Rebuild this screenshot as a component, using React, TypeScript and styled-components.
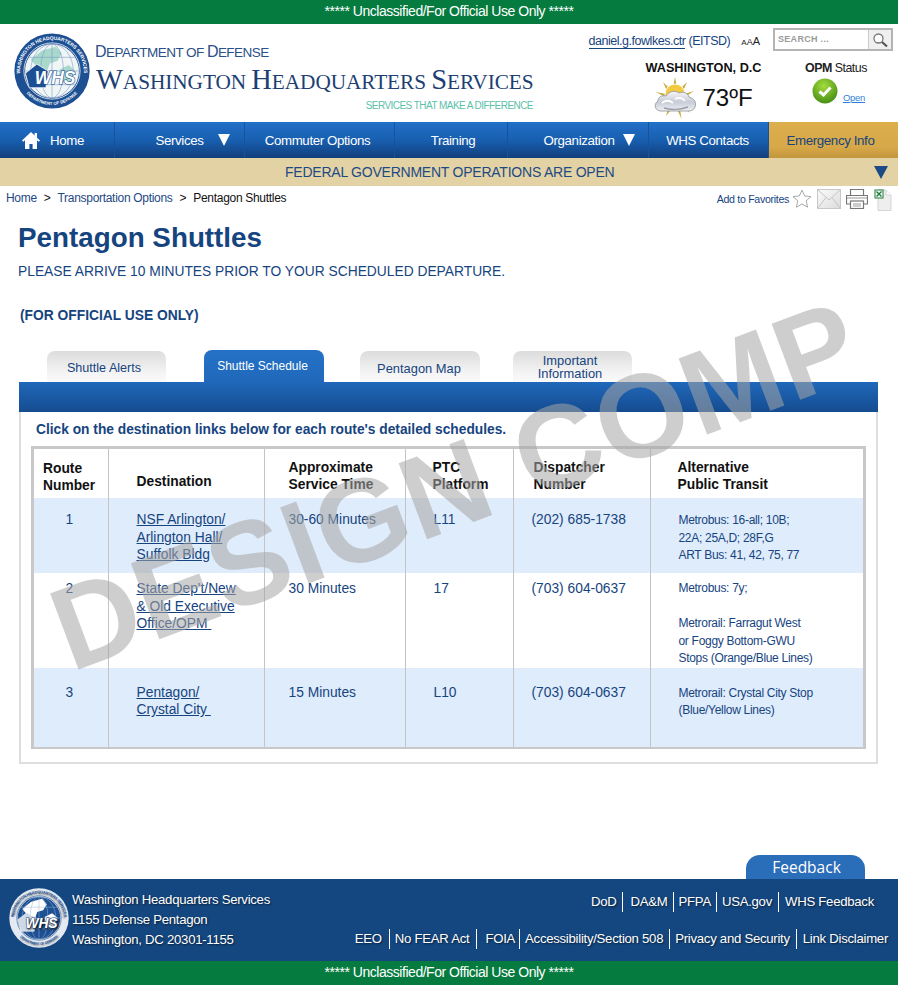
import React from "react";
import styled, { createGlobalStyle } from "styled-components";

const Global = createGlobalStyle`
  html, body { margin: 0; padding: 0; background: #fff; }
  body { font-family: "Liberation Sans", Arial, sans-serif; color: #16447f; }
  * { box-sizing: border-box; }
`;

const Page = styled.div`
  position: relative;
  width: 898px;
  height: 985px;
  overflow: hidden;
  display: flex;
  flex-direction: column;
`;
const Classification = styled.div`
  height: 24px;
  flex: none;
  background: #067b3f;
  color: #fff;
  font-size: 14px;
  letter-spacing: -.47px;
  line-height: 23px;
  text-align: center;
`;
const Header = styled.header`
  height: 98px;
  flex: none;
  display: flex;
  padding: 9px 5px 0 14px;
`;
const Brand = styled.div`
  display: flex;
  gap: 5px;
  width: 560px;
`;
const BrandText = styled.div`
  display: flex;
  flex-direction: column;
  padding-top: 9px;
`;
const Dept = styled.div`
  font-size: 13.5px;
  line-height: 19px;
  color: #2a4f8a;
  letter-spacing: -.55px;
  white-space: nowrap;
  b { font-weight: 400; font-size: 16px; }
`;
const Wash = styled.div`
  font-family: "Liberation Serif", serif;
  font-size: 21.3px;
  line-height: 32px;
  margin-top: 2px;
  margin-left: 1px;
  color: #1d3f74;
  letter-spacing: -.07px;
  white-space: nowrap;
  b { font-weight: 400; font-size: 28.5px; }
`;
const Motto = styled.div`
  font-size: 10px;
  line-height: 14px;
  margin-top: 1px;
  text-align: right;
  color: #5cbfa8;
  width: 438px;
  letter-spacing: -.55px;
`;
const Utility = styled.div`
  flex: 1;
  display: flex;
  flex-direction: column;
`;
const UserRow = styled.div`
  display: flex;
  justify-content: flex-end;
  align-items: flex-start;
  height: 27px;
`;
const User = styled.div`
  font-size: 12.5px;
  line-height: 16px;
  letter-spacing: -.47px;
  white-space: nowrap;
  a { color: #16447f; text-decoration: none; border-bottom: 1px solid #16447f; }
`;
const TextSize = styled.div`
  color: #222;
  font-size: 8px;
  line-height: 14px;
  margin: 1px 13px 0 11px;
  b { font-weight: 400; font-size: 11px; }
  i { font-style: normal; font-size: 9px; }
`;
const Search = styled.div`
  width: 120px;
  height: 23px;
  margin-top: -5px;
  border: 2px solid #b4b4b4;
  display: flex;
  background: #fff;
`;
const SearchField = styled.div`
  flex: 1;
  font-size: 9px;
  letter-spacing: .3px;
  line-height: 19px;
  padding-left: 3px;
  color: #9a9a9a;
  border-right: 1px solid #ccc;
  font-weight: 700;
`;
const SearchBtn = styled.div`
  width: 22px;
  background: #f0f0f0;
  display: flex;
  align-items: center;
  justify-content: center;
`;
const WidgetRow = styled.div`
  display: flex;
`;
const Weather = styled.div`
  width: 143px;
  margin-left: 58px;
  display: flex;
  flex-direction: column;
  align-items: center;
`;
const City = styled.div`
  font-size: 12.7px;
  line-height: 16px;
  font-weight: 700;
  color: #111;
  white-space: nowrap;
`;
const Temp = styled.div`
  display: flex;
  align-items: center;
  gap: 5px;
  margin-top: 1px;
  font-size: 24px;
  line-height: 34px;
  color: #111;
`;
const Opm = styled.div`
  margin-left: 26px;
  width: 70px;
  display: flex;
  flex-direction: column;
  align-items: center;
`;
const OpmTitle = styled.div`
  font-size: 12.4px;
  line-height: 16px;
  color: #222;
  white-space: nowrap;
  letter-spacing: -.5px;
  b { font-weight: 700; }
`;
const OpmBody = styled.div`
  display: flex;
  align-items: flex-end;
  gap: 5px;
  margin-left: 5px;
  margin-top: 2px;
  a { color: #2f7fd8; font-size: 9.4px; line-height: 11px; letter-spacing: -.2px; text-decoration: underline; margin-bottom: 1px; }
`;
const Nav = styled.nav`
  height: 36px;
  flex: none;
  display: grid;
  grid-template-columns: 115px 130px 150px 113px 141px 120px 129px;
  background: linear-gradient(#2270c8, #185fb0 50%, #123f7c);
`;
const NavItem = styled.div<{ $warm?: boolean; $pl?: number; $gap?: number; $pr?: number }>`
  display: flex;
  align-items: center;
  justify-content: center;
  gap: ${p => p.$gap ?? 10}px;
  padding-left: ${p => p.$pl ?? 0}px;
  padding-right: ${p => p.$pr ?? 0}px;
  font-size: 13.3px;
  letter-spacing: -.38px;
  color: ${p => (p.$warm ? "#16447f" : "#fff")};
  background: ${p => (p.$warm ? "linear-gradient(#dcae4c, #d6a848 70%, #c4963c)" : "transparent")};
  border-right: ${p => (p.$warm ? "none" : "1px solid #175398")};
  white-space: nowrap;
`;
const Caret = styled.span<{ $c?: string; $w?: number; $h?: number }>`
  display: inline-block;
  width: 0;
  height: 0;
  border-left: ${p => (p.$w ?? 13) / 2}px solid transparent;
  border-right: ${p => (p.$w ?? 13) / 2}px solid transparent;
  border-top: ${p => p.$h ?? 12}px solid ${p => p.$c ?? "#fff"};
`;
const GovBar = styled.div`
  height: 28px;
  flex: none;
  background: #e3d3a4;
  color: #1d4a85;
  font-size: 14px;
  letter-spacing: -.23px;
  line-height: 27px;
  display: flex;
  justify-content: space-between;
  align-items: center;
  padding: 0 10px 0 285px;
`;
const Crumbs = styled.div`
  height: 26px;
  flex: none;
  display: flex;
  justify-content: space-between;
  padding: 5px 6px 0 6px;
`;
const CrumbList = styled.div`
  display: flex;
  gap: 7px;
  font-size: 12px;
  line-height: 15px;
  letter-spacing: -.3px;
  color: #111;
  a { color: #1d4a85; text-decoration: none; }
`;
const Tools = styled.div`
  display: flex;
  align-items: flex-start;
  gap: 5px;
  margin-top: -2px;
  font-size: 10.6px;
  line-height: 20px;
  letter-spacing: -.3px;
  color: #16447f;
  svg:first-of-type { margin-left: -2px; }
`;
const Main = styled.main`
  flex: 1;
  padding: 9px 20px 0 19px;
  display: flex;
  flex-direction: column;
  align-items: stretch;
`;
const Title = styled.h1`
  margin: 0 0 0 -1px;
  font-size: 27.8px;
  line-height: 34px;
  font-weight: 700;
  color: #16447f;
`;
const Notice = styled.p`
  margin: 8px 0 0 -1px;
  font-size: 13.8px;
  line-height: 18px;
`;
const Fouo = styled.p`
  margin: 26px 0 0 1px;
  font-size: 13.8px;
  line-height: 18px;
  font-weight: 700;
`;
const Tabs = styled.div`
  display: flex;
  margin-top: 25px;
  height: 32px;
  align-items: flex-end;
  padding-left: 28px;
`;
const Tab = styled.div<{ $active?: boolean; $w: number; $gap: number; $fs?: number; $nudge?: number; $lift?: number }>`
  width: ${p => p.$w}px;
  margin-right: ${p => p.$gap}px;
  height: ${p => (p.$active ? 32 : 31)}px;
  border-radius: 8px 8px 0 0;
  background: ${p => (p.$active ? "linear-gradient(#2472c8, #2068ba)" : "linear-gradient(#dcdcdc, #f4f4f4 70%, #fafafa)")};
  color: ${p => (p.$active ? "#fff" : "#16447f")};
  font-size: ${p => p.$fs ?? 12.6}px;
  line-height: 13px;
  display: flex;
  align-items: center;
  justify-content: center;
  text-align: center;
  padding-top: ${p => (p.$active ? 0 : 3 - (p.$lift ?? 0))}px;
  padding-right: ${p => p.$nudge ?? 0}px;
`;
const TabBar = styled.div`
  height: 30px;
  background: linear-gradient(#2068ba, #154c90);
  flex: none;
`;
const Panel = styled.section`
  height: 352px;
  border: 2px solid #dedede;
  border-top: none;
  padding: 0 10px;
`;
const Hint = styled.div`
  font-size: 13.75px;
  font-weight: 700;
  line-height: 33px;
  padding: 1px 0 0 5px;
  white-space: nowrap;
`;
const TableFrame = styled.div`
  border: 3px solid #c9c7c7;
  height: 303px;
`;
const Grid = styled.table`
  width: 100%;
  height: 100%;
  border-collapse: collapse;
  table-layout: fixed;
`;
const Th = styled.th<{ $w?: number; $pl: number; $pb?: number; $end?: boolean }>`
  ${p => (p.$w ? `width: ${p.$w}px;` : "")}
  padding: 0 0 ${p => p.$pb ?? 5}px ${p => p.$pl}px;
  height: 49px;
  text-align: left;
  font-size: 13.8px;
  line-height: 17px;
  color: #111;
  vertical-align: bottom;
  border-right: ${p => (p.$end ? "none" : "1px solid #c4c4c4")};
`;
const Row = styled.tr<{ $shade?: boolean; $h: number }>`
  height: ${p => p.$h}px;
  background: ${p => (p.$shade ? "#dfecfb" : "#fff")};
`;
const Td = styled.td<{ $pl: number; $center?: boolean; $end?: boolean; $pt: number; $small?: boolean }>`
  vertical-align: top;
  padding: ${p => p.$pt}px ${p => (p.$center ? 3 : 0)}px 0 ${p => p.$pl}px;
  font-size: ${p => (p.$small ? "12px" : "13.8px")};
  line-height: 17.5px;
  letter-spacing: ${p => (p.$small ? "-.3px" : "0")};
  text-align: ${p => (p.$center ? "center" : "left")};
  color: #16447f;
  border-right: ${p => (p.$end ? "none" : "1px solid #c4c4c4")};
  a { color: #16447f; text-decoration: underline; }
`;
const Watermark = styled.div`
  position: absolute;
  left: 455px;
  top: 485px;
  transform: translate(-50%, -50%) rotate(-20.5deg);
  font-size: 118px;
  line-height: 1;
  font-weight: 700;
  color: rgba(165, 165, 165, .55);
  white-space: nowrap;
  letter-spacing: 1px;
  pointer-events: none;
`;
const FeedbackRow = styled.div`
  flex: none;
  height: 24px;
  display: flex;
  justify-content: flex-end;
  padding-right: 33px;
`;
const Feedback = styled.div`
  width: 119px;
  height: 24px;
  border-radius: 14px 14px 0 0;
  background: #2a6db8;
  color: #fff;
  text-align: center;
  font-family: "Open Sans", sans-serif;
  font-size: 15.5px;
  line-height: 24px;
  padding-left: 2px;
`;
const Footer = styled.footer`
  height: 82px;
  flex: none;
  background: #144780;
  color: #fff;
  display: flex;
  justify-content: space-between;
  padding: 0 10px 0 9px;
  text-shadow: 1px 1px 2px rgba(0,0,0,.6);
  font-size: 13.2px;
  letter-spacing: -.28px;
`;
const Address = styled.div`
  display: flex;
  gap: 3px;
  padding-top: 9px;
  line-height: 20px;
`;
const AddressText = styled.div`
  padding-top: 2px;
  white-space: nowrap;
`;
const LinkCols = styled.div`
  display: flex;
  flex-direction: column;
  align-items: flex-end;
  padding-top: 13px;
  gap: 17px;
`;
const LinkRow = styled.div<{ $inset?: number }>`
  display: flex;
  height: 20px;
  align-items: center;
  white-space: nowrap;
  margin-right: ${p => p.$inset ?? 0}px;
`;
const LinkItem = styled.span<{ $pl: number; $pr: number; $last?: boolean }>`
  padding: 0 ${p => p.$pr}px 0 ${p => p.$pl}px;
  line-height: 20px;
  border-right: ${p => (p.$last ? "none" : "1px solid #fff")};
`;

const Seal = ({ size, mono }: { size: number; mono?: boolean }) => {
  const a = mono ? "m" : "c";
  return (
    <svg width={size} height={size} viewBox="0 0 100 100" aria-hidden="true">
      <circle cx="50" cy="50" r="49.500" fill={mono ? "#e4eaf2" : "#1d4f93"} />
      <circle cx="50" cy="50" r="37" fill="none" stroke={mono ? "#1d5092" : "#fff"} strokeWidth="1" />
      <circle cx="50" cy="50" r="35.500" fill={mono ? "#1d5092" : "#f0f6f6"} />
      <path d="M22 35l15-12 18-5 8 9-6 10-10 3-3 9-9 2-6-8z" fill={mono ? "#fff" : "#a8d9cb"} />
      <path d="M60 48l12-6 9 8-6 14-11 2-5-8z" fill={mono ? "#fff" : "#a8d9cb"} />
      <g fill="none" stroke={mono ? "#9db6d6" : "#7f9cc8"} strokeWidth=".8">
        <ellipse cx="50" cy="50" rx="15" ry="35.500" />
        <ellipse cx="50" cy="50" rx="28" ry="35.500" />
        <path d="M14.500 50h71M19 32h62M19 68h62M50 14.500v71" />
      </g>
      <path d="M15 53L30 41 45 50 42 72H20z" fill={mono ? "#cfd9e6" : "#1d4f93"} stroke="#fff" strokeWidth="1" />
      <text x="54" y="67" textAnchor="middle" fontFamily="Liberation Sans, sans-serif" fontWeight="700" fontStyle="italic" fontSize="23" fill="#fff" stroke={mono ? "#1d5092" : "#1d4f93"} strokeWidth="1.600" paintOrder="stroke">WHS</text>
      <defs>
        <path id={`${a}Top`} d="M9 60A42 42 0 1 1 91 60" />
        <path id={`${a}Bot`} d="M10 69A44 44 0 0 0 90 69" />
      </defs>
      <text fontSize="6.500" fontWeight="700" fill={mono ? "#1d5092" : "#fff"} fontFamily="Liberation Sans, sans-serif">
        <textPath href={`#${a}Top`} startOffset="50%" textAnchor="middle">WASHINGTON HEADQUARTERS SERVICES</textPath>
      </text>
      <text fontSize="5.600" fontWeight="700" fill={mono ? "#1d5092" : "#fff"} fontFamily="Liberation Sans, sans-serif">
        <textPath href={`#${a}Bot`} startOffset="50%" textAnchor="middle">DEPARTMENT OF DEFENSE</textPath>
      </text>
    </svg>
  );
};

const WeatherIcon = () => (
  <svg width="43" height="42" viewBox="0 0 43 42" aria-hidden="true">
    <defs>
      <linearGradient id="cloud" x1="0" y1="0" x2="0" y2="1">
        <stop offset="0" stopColor="#f6f7fa" />
        <stop offset=".55" stopColor="#c8ccd6" />
        <stop offset="1" stopColor="#eef0f4" />
      </linearGradient>
    </defs>
    <g fill="#c9a93c">
      <path d="M21 0l2 10h-4zM9 5l7 7-3 2zM33 5l-7 7 3 2zM2 15l10 2-1 3zM40 14l-10 3 1 3zM26 32l1.500 10-4-9zM14 32l-2 7 4-5zM33 31l3 5-5-4z" />
    </g>
    <circle cx="21" cy="17" r="10" fill="#f3c93f" stroke="#fff" strokeWidth="1" />
    <path d="M7 34c-6 0-8-7-3-10 0-4 4-6 8-5 3-5 9-6 13-3 4-2 9 0 10 4 5 1 8 6 6 10-1 3-4 4-7 4z" fill="url(#cloud)" stroke="#8d9099" strokeWidth=".8" />
    <path d="M8 26c3-3 8-3 11 0M21 22c4-2 8-1 10 2" fill="none" stroke="#fff" strokeWidth="1.800" />
    <path d="M10 31c6 2 16 2 24-1" fill="none" stroke="#9a9da6" strokeWidth="1.500" />
  </svg>
);

const CheckIcon = () => (
  <svg width="26" height="26" viewBox="0 0 26 26" aria-hidden="true">
    <defs>
      <radialGradient id="ok" cx="45%" cy="30%" r="75%">
        <stop offset="0" stopColor="#a5dc3c" />
        <stop offset="1" stopColor="#3f8a12" />
      </radialGradient>
    </defs>
    <circle cx="13" cy="13" r="12.500" fill="url(#ok)" />
    <path d="M7.500 13.500l4 3.500 7-7.500" fill="none" stroke="#fff" strokeWidth="3" />
  </svg>
);

const HomeIcon = () => (
  <svg width="18" height="17" viewBox="0 0 18 17" aria-hidden="true">
    <path d="M9 0L0 8.500l1.200 1.300L3 8.200V17h4.400v-5h3.200v5H15V8.200l1.800 1.600L18 8.500 15 5.700V1h-2.400v2.400z" fill="#fff" />
  </svg>
);

const MagnifierIcon = () => (
  <svg width="16" height="16" viewBox="0 0 16 16" aria-hidden="true">
    <circle cx="6.500" cy="6.500" r="4.500" fill="#fff" stroke="#777" strokeWidth="1.300" />
    <path d="M10 10l5 4.500" stroke="#555" strokeWidth="2.200" />
  </svg>
);

const StarIcon = () => (
  <svg width="20" height="20" viewBox="0 0 20 20" aria-hidden="true">
    <path d="M10 1l2.700 6 6.300.6-4.800 4.200 1.400 6.400L10 15l-5.600 3.200 1.400-6.400L1 7.600 7.300 7z" fill="#fff" stroke="#aaa" />
  </svg>
);

const MailIcon = () => (
  <svg width="24" height="20" viewBox="0 0 24 20" aria-hidden="true">
    <defs>
      <linearGradient id="mail" x1="0" y1="0" x2="1" y2="1">
        <stop offset="0" stopColor="#fbfbfb" />
        <stop offset="1" stopColor="#dcdcdc" />
      </linearGradient>
    </defs>
    <rect x=".5" y=".5" width="23" height="19" fill="url(#mail)" stroke="#c8c8c8" />
    <path d="M1 1l11 10L23 1M1 19l8-10.500M23 19l-8-10.500" fill="none" stroke="#c4c4c4" />
  </svg>
);

const PrintIcon = () => (
  <svg width="22" height="20" viewBox="0 0 22 20" aria-hidden="true">
    <path d="M4.500 6V.5h13V6M4.500 15H.5V6.500h21V15H17.500" fill="#fff" stroke="#777" strokeWidth="1.200" />
    <rect x="4.500" y="12" width="13" height="7.500" fill="#fff" stroke="#777" strokeWidth="1.200" />
    <path d="M1 9h20" stroke="#999" />
    <path d="M7 15h8M7 17h8" stroke="#999" />
  </svg>
);

const ExcelIcon = () => (
  <svg width="19" height="22" viewBox="-2 0 19 22" aria-hidden="true">
    <path d="M3 1h8l5 5v15.500H3z" fill="#eeeeee" stroke="#d4d4d4" />
    <path d="M11 1v5h5" fill="#fff" stroke="#d4d4d4" />
    <rect x="0" y="1" width="8" height="8" fill="#fff" stroke="#1d7a36" />
    <path d="M1.500 2.500l5 5M6.500 2.500l-5 5" stroke="#1d7a36" strokeWidth="1.400" />
  </svg>
);

const topLinks: [string, number, number][] = [["DoD", 0, 5], ["DA&M", 8, 5], ["PFPA", 5, 5], ["USA.gov", 5, 6], ["WHS Feedback", 6, 0]];
const bottomLinks: [string, number, number][] = [["EEO", 0, 7], ["No FEAR Act", 5, 7], ["FOIA", 8, 4], ["Accessibility/Section 508", 5, 6], ["Privacy and Security", 5, 6], ["Link Disclaimer", 6, 0]];

export default function App() {
  return (
    <Page>
      <Global />
      <Classification>***** Unclassified/For Official Use Only *****</Classification>
      <Header>
        <Brand>
          <Seal size={76} />
          <BrandText>
            <Dept><b>D</b>EPARTMENT OF <b>D</b>EFENSE</Dept>
            <Wash><b>W</b>ASHINGTON <b>H</b>EADQUARTERS <b>S</b>ERVICES</Wash>
            <Motto>SERVICES THAT MAKE A DIFFERENCE</Motto>
          </BrandText>
        </Brand>
        <Utility>
          <UserRow>
            <User><a>daniel.g.fowlkes.ctr</a> (EITSD)</User>
            <TextSize>A<i>A</i><b>A</b></TextSize>
            <Search>
              <SearchField>SEARCH ...</SearchField>
              <SearchBtn><MagnifierIcon /></SearchBtn>
            </Search>
          </UserRow>
          <WidgetRow>
            <Weather>
              <City>WASHINGTON, D.C</City>
              <Temp><WeatherIcon />73ºF</Temp>
            </Weather>
            <Opm>
              <OpmTitle><b>OPM</b> Status</OpmTitle>
              <OpmBody><CheckIcon /><a>Open</a></OpmBody>
            </Opm>
          </WidgetRow>
        </Utility>
      </Header>
      <Nav>
        <NavItem $pr={8}><HomeIcon />Home</NavItem>
        <NavItem $pl={27} $gap={15}>Services<Caret /></NavItem>
        <NavItem $pr={4}>Commuter Options</NavItem>
        <NavItem $pl={4}>Training</NavItem>
        <NavItem $pl={23} $gap={9}>Organization<Caret /></NavItem>
        <NavItem $pr={2}>WHS Contacts</NavItem>
        <NavItem $warm $pr={6}>Emergency Info</NavItem>
      </Nav>
      <GovBar>
        FEDERAL GOVERNMENT OPERATIONS ARE OPEN
        <Caret $c="#1c4a86" $w={15} $h={13} />
      </GovBar>
      <Crumbs>
        <CrumbList>
          <a>Home</a><span>&gt;</span><a>Transportation Options</a><span>&gt;</span><span>Pentagon Shuttles</span>
        </CrumbList>
        <Tools>
          Add to Favorites
          <StarIcon />
          <MailIcon />
          <PrintIcon />
          <ExcelIcon />
        </Tools>
      </Crumbs>
      <Main>
        <Title>Pentagon Shuttles</Title>
        <Notice>PLEASE ARRIVE 10 MINUTES PRIOR TO YOUR SCHEDULED DEPARTURE.</Notice>
        <Fouo>(FOR OFFICIAL USE ONLY)</Fouo>
        <Tabs>
          <Tab $w={119} $gap={38} $nudge={5}>Shuttle Alerts</Tab>
          <Tab $w={120} $gap={36} $active $fs={12} $nudge={3}>Shuttle Schedule</Tab>
          <Tab $w={120} $gap={33} $fs={12.9} $nudge={2}>Pentagon Map</Tab>
          <Tab $w={119} $gap={0} $fs={12.9} $nudge={5} $lift={2}>Important<br />Information</Tab>
        </Tabs>
        <TabBar />
        <Panel>
          <Hint>Click on the destination links below for each route's detailed schedules.</Hint>
          <TableFrame>
            <Grid>
              <thead>
                <tr>
                  <Th $w={74} $pl={9} $pb={4}>Route<br />Number</Th>
                  <Th $w={156} $pl={28} $pb={8}>Destination</Th>
                  <Th $w={141} $pl={24}>Approximate<br />Service Time</Th>
                  <Th $w={108} $pl={27}>PTC<br />Platform</Th>
                  <Th $w={137} $pl={20}>Dispatcher<br />Number</Th>
                  <Th $pl={27} $end>Alternative<br />Public Transit</Th>
                </tr>
              </thead>
              <tbody>
                <Row $shade $h={75}>
                  <Td $pt={13} $pl={0} $center>1</Td>
                  <Td $pt={13} $pl={28}><a>NSF Arlington/</a><br /><a>Arlington Hall/</a><br /><a>Suffolk Bldg</a></Td>
                  <Td $pt={13} $pl={24}>30-60 Minutes</Td>
                  <Td $pt={13} $pl={28}>L11</Td>
                  <Td $pt={13} $pl={18}>(202) 685-1738</Td>
                  <Td $pt={14} $pl={28} $end $small>Metrobus: 16-all; 10B;<br />22A; 25A,D; 28F,G<br />ART Bus: 41, 42, 75, 77</Td>
                </Row>
                <Row $h={94}>
                  <Td $pt={7} $pl={0} $center>2</Td>
                  <Td $pt={7} $pl={28}><a>State Dep't/New</a><br /><a>&amp; Old Executive</a><br /><a>Office/OPM&nbsp;</a></Td>
                  <Td $pt={7} $pl={24}>30 Minutes</Td>
                  <Td $pt={7} $pl={28}>17</Td>
                  <Td $pt={7} $pl={18}>(703) 604-0637</Td>
                  <Td $pt={7} $pl={28} $end $small>Metrobus: 7y;<br /><br />Metrorail: Farragut West<br />or Foggy Bottom-GWU<br />Stops (Orange/Blue Lines)</Td>
                </Row>
                <Row $shade $h={79}>
                  <Td $pt={16} $pl={0} $center>3</Td>
                  <Td $pt={16} $pl={28}><a>Pentagon/</a><br /><a>Crystal City&nbsp;</a></Td>
                  <Td $pt={16} $pl={24}>15 Minutes</Td>
                  <Td $pt={16} $pl={28}>L10</Td>
                  <Td $pt={16} $pl={18}>(703) 604-0637</Td>
                  <Td $pt={17} $pl={28} $end $small>Metrorail: Crystal City Stop<br />(Blue/Yellow Lines)</Td>
                </Row>
              </tbody>
            </Grid>
          </TableFrame>
        </Panel>
      </Main>
      <FeedbackRow><Feedback>Feedback</Feedback></FeedbackRow>
      <Footer>
        <Address>
          <Seal size={60} mono />
          <AddressText>
            Washington Headquarters Services<br />
            1155 Defense Pentagon<br />
            Washington, DC 20301-1155
          </AddressText>
        </Address>
        <LinkCols>
          <LinkRow $inset={14}>
            {topLinks.map(([t, l, r], i) => (
              <LinkItem key={t} $pl={l} $pr={r} $last={i === topLinks.length - 1}>{t}</LinkItem>
            ))}
          </LinkRow>
          <LinkRow>
            {bottomLinks.map(([t, l, r], i) => (
              <LinkItem key={t} $pl={l} $pr={r} $last={i === bottomLinks.length - 1}>{t}</LinkItem>
            ))}
          </LinkRow>
        </LinkCols>
      </Footer>
      <Classification>***** Unclassified/For Official Use Only *****</Classification>
      <Watermark>DESIGN COMP</Watermark>
    </Page>
  );
}
